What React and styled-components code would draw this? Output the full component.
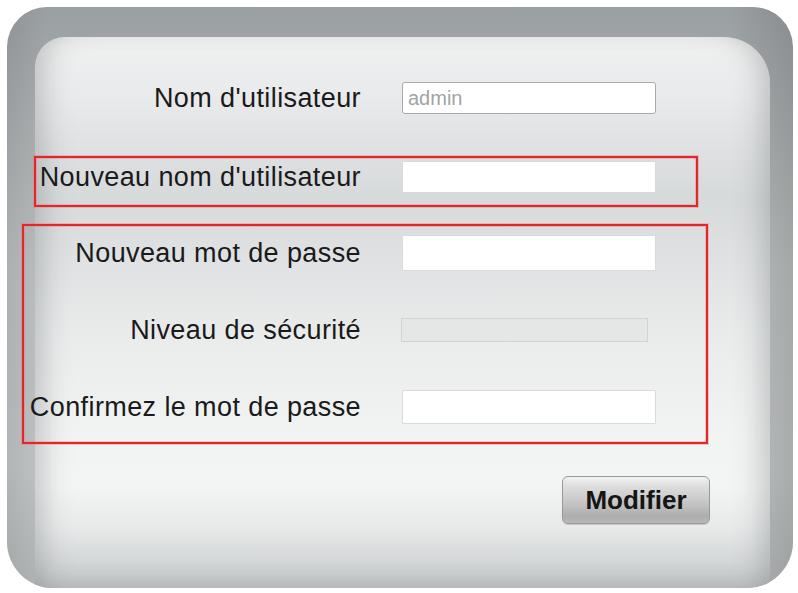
import React from "react";
import styled, { createGlobalStyle } from "styled-components";

const Global = createGlobalStyle`
  html, body { margin: 0; padding: 0; background: #ffffff; }
  body { font-family: "Liberation Sans", Arial, sans-serif; }
  * { box-sizing: border-box; }
`;

const Frame = styled.div`
  margin: 7px 5px 5px 7px;
  width: 786px;
  height: 581px;
  border-radius: 40px 40px 46px 46px;
  padding: 30px 23px 0 28px;
  background:
    linear-gradient(to right, rgba(0,0,0,0.08), rgba(0,0,0,0) 5%, rgba(0,0,0,0) 92%, rgba(0,0,0,0.12)),
    linear-gradient(to bottom, #9a9fa1 0%, #a4a8aa 12%, #bcbfc0 45%, #c1c4c5 80%, #b2b5b6 100%);
  overflow: hidden;
`;

const Inner = styled.div`
  width: 735px;
  height: 551px;
  border-radius: 30px 46px 0 0;
  padding-top: 41px;
  display: flex;
  flex-direction: column;
  background: linear-gradient(
    to bottom,
    #eff0f0 0px,
    #e9eaeb 60px,
    #dfe1e2 110px,
    #d7dadb 160px,
    #dfe1e2 220px,
    #eaecec 300px,
    #f2f3f3 400px,
    #f3f4f4 450px,
    #e8eaea 490px,
    #d3d6d7 525px,
    #bcbfc0 551px
  );
  box-shadow:
    inset 26px 0 28px -18px rgba(110, 115, 118, 0.38),
    inset -26px 0 28px -18px rgba(110, 115, 118, 0.38);
`;

const Row = styled.div`
  display: grid;
  grid-template-columns: ${(p) => p.$labelW}px 254px;
  column-gap: 41px;
  align-items: center;
  height: ${(p) => p.$h || 40}px;
`;

const Label = styled.label`
  text-align: right;
  font-size: 27px;
  letter-spacing: 0.4px;
  color: #1a1a1a;
  white-space: nowrap;
`;

const Input = styled.input`
  width: 254px;
  height: ${(p) => p.$h || 32}px;
  border: 1px solid ${(p) => (p.$strong ? "#aaaaaa" : "#d9dbdb")};
  border-radius: ${(p) => (p.$strong ? 3 : 1)}px;
  background: #ffffff;
  padding: 0 5px;
  font-family: "Liberation Sans", Arial, sans-serif;
  font-size: 20px;
  color: #a3a3a3;
  outline: none;
`;

const Strength = styled.div`
  width: 247px;
  height: 24px;
  margin-left: -1px;
  background: #e5e6e6;
  border: 1px solid #d2d3d3;
`;

const Group = styled.div`
  border: 2px solid #e1262c;
  box-shadow: 0 0 0 1px rgba(240, 110, 110, 0.35), inset 0 0 0 1px rgba(240, 110, 110, 0.35);
  width: ${(p) => p.$w}px;
  margin-left: ${(p) => p.$ml}px;
  margin-top: ${(p) => p.$mt}px;
  padding: ${(p) => p.$pad};
  display: flex;
  flex-direction: column;
  gap: 37px;
`;

const ButtonBar = styled.div`
  display: flex;
  justify-content: flex-end;
  padding-right: 60px;
  margin-top: 32px;
`;

const Button = styled.button`
  width: 148px;
  height: 48px;
  border: 1px solid #9a9a9a;
  border-radius: 6px;
  background: linear-gradient(
    to bottom,
    #f2f2f2 0%,
    #dcdcdc 22%,
    #c6c6c6 55%,
    #adadad 85%,
    #b8b8b8 100%
  );
  font-family: "Liberation Sans", Arial, sans-serif;
  font-weight: bold;
  font-size: 26px;
  color: #151515;
  padding: 0;
  box-shadow: 0 1px 1px rgba(0, 0, 0, 0.15);
  cursor: pointer;
`;

export default function App() {
  return (
    <>
      <Global />
      <Frame>
        <Inner>
          <Row $labelW={326}>
            <Label>Nom d'utilisateur</Label>
            <Input $strong defaultValue="admin" readOnly />
          </Row>

          <Group $w={664} $ml={-1} $mt={38} $pad="0 0 9px 0">
            <Row $labelW={325} $h={38}>
              <Label>Nouveau nom d'utilisateur</Label>
              <Input $h={32} />
            </Row>
          </Group>

          <Group $w={686} $ml={-13} $mt={17} $pad="7px 0 15px 0">
            <Row $labelW={337}>
              <Label>Nouveau mot de passe</Label>
              <Input type="password" $h={36} />
            </Row>
            <Row $labelW={337}>
              <Label>Niveau de sécurité</Label>
              <Strength />
            </Row>
            <Row $labelW={337}>
              <Label>Confirmez le mot de passe</Label>
              <Input type="password" $h={34} />
            </Row>
          </Group>

          <ButtonBar>
            <Button>Modifier</Button>
          </ButtonBar>
        </Inner>
      </Frame>
    </>
  );
}
